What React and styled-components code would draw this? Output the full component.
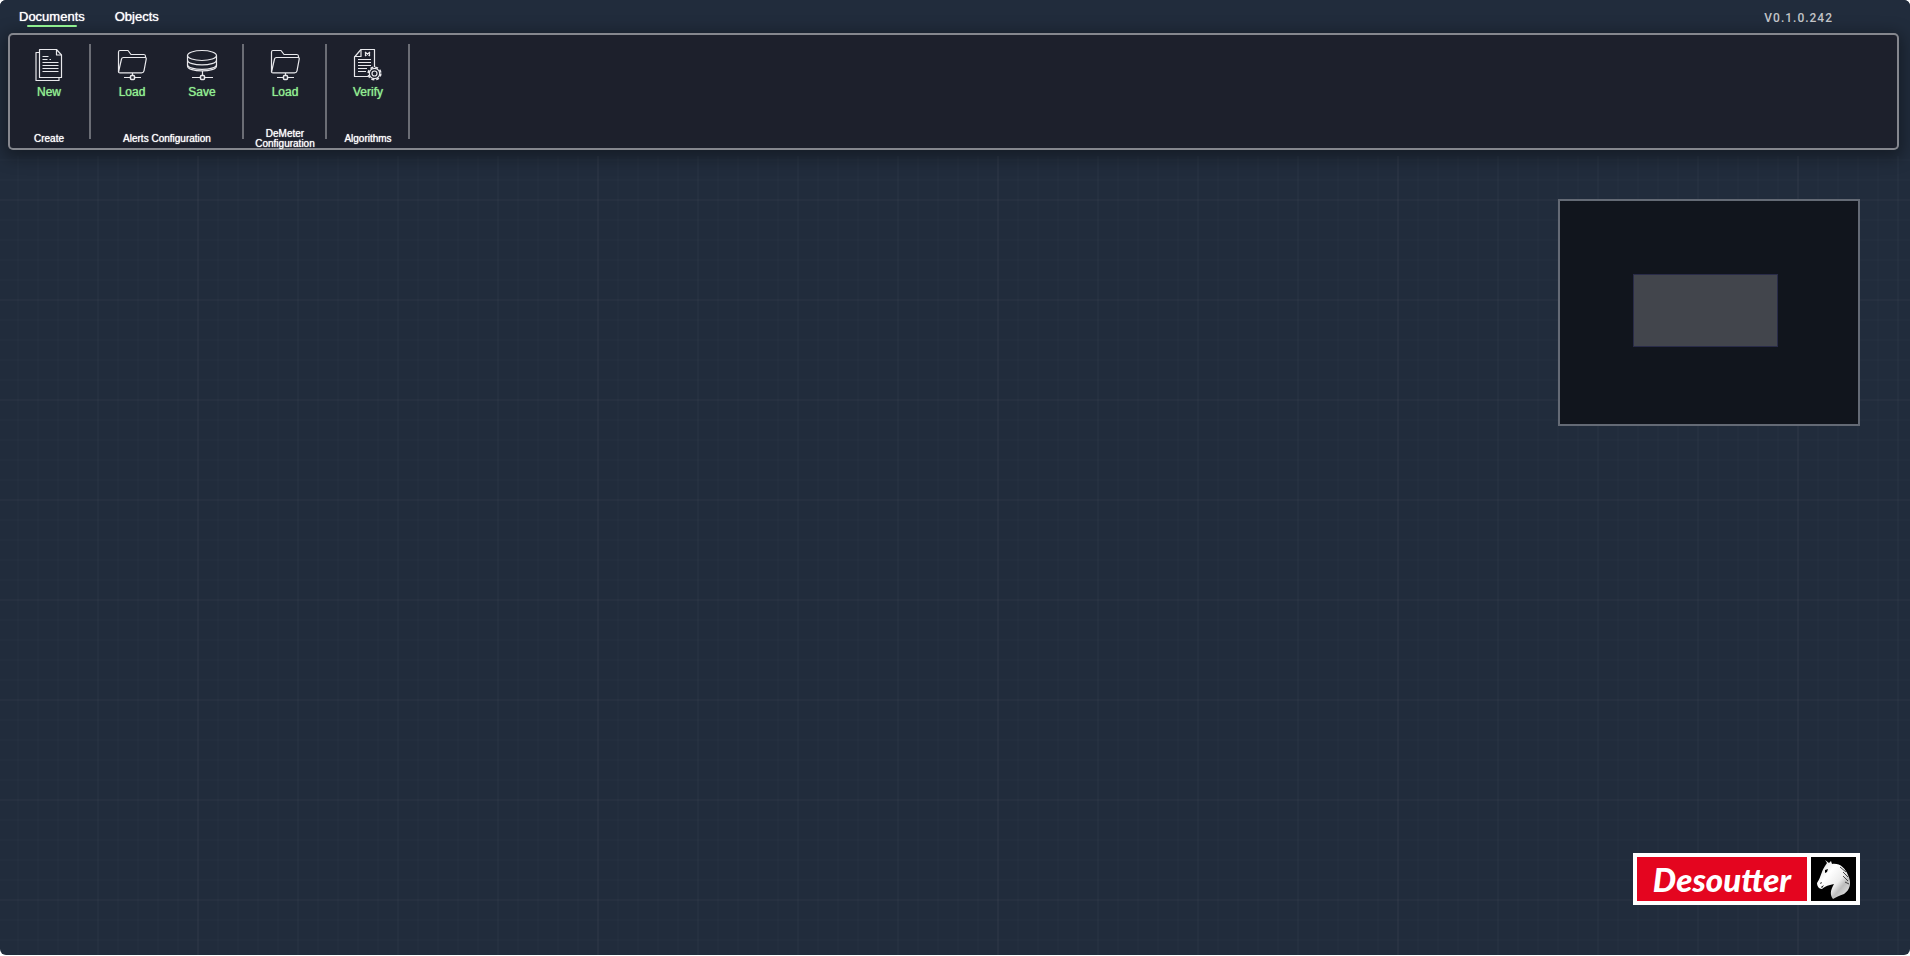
import React from 'react'
import styled, { createGlobalStyle } from 'styled-components'

const GlobalStyle = createGlobalStyle`
  * {
    box-sizing: border-box;
  }
  body {
    margin: 0;
    background: #fff;
    font-family: "Liberation Sans", Arial, sans-serif;
  }
`

const minor = 'rgba(255, 255, 255, 0.008)'
const major = 'rgba(255, 255, 255, 0.01)'

const Page = styled.div`
  display: flex;
  flex-direction: column;
  height: calc(100vh - 1px);
  overflow: hidden;
  border-radius: 6px;
  background: #212c3c;
`

const TopBar = styled.header`
  position: relative;
  z-index: 1;
  padding: 0 11px 6px 8px;
  background: #212c3c;
`

const TabRow = styled.div`
  display: flex;
  align-items: center;
  justify-content: space-between;
  height: 33px;
  padding: 3px 66px 0 11px;
`

const Tabs = styled.nav`
  display: flex;
  gap: 30px;
`

const Tab = styled.button`
  display: flex;
  flex-direction: column;
  align-items: center;
  padding: 0;
  border: none;
  background: none;
  color: #fff;
  font-family: inherit;
  font-size: 13px;
  line-height: 16px;
  text-shadow: 0 0 1px #fff;
  cursor: pointer;

  &::after {
    content: "";
    width: ${props => props.$active ? '50px' : '100%'};
    height: 2px;
    border-radius: 1px;
    background: ${props => props.$active ? '#90ee90' : 'transparent'};
  }
`

const Version = styled.span`
  color: #c2c4c8;
  font-family: Roboto, sans-serif;
  font-size: 12px;
  font-weight: 500;
  letter-spacing: 1px;
`

const Ribbon = styled.div`
  display: flex;
  height: 117px;
  border-radius: 5px;
  background: #1d202c;
  box-shadow: inset 0 0 0 2px #85878e, 0 4px 16px 4px rgba(0, 0, 0, 0.35);
`

const Group = styled.section`
  display: flex;
  flex-direction: column;
  height: 95px;
  margin-top: 11px;
  padding: 2px 5px 0 6px;
  border-right: 2px solid #6b6d75;
`

const GroupItems = styled.div`
  display: flex;
  flex-shrink: 0;
  height: 83px;
`

const GroupTitle = styled.h2`
  display: flex;
  flex-shrink: 0;
  align-items: center;
  justify-content: center;
  width: min-content;
  min-width: 100%;
  height: 20px;
  margin: 0;
  color: #fff;
  font-size: 10px;
  font-weight: 400;
  line-height: 10px;
  text-align: center;
  text-shadow: 0 0 1px #fff;
`

const ToolButton = styled.button`
  display: flex;
  flex-direction: column;
  align-items: center;
  align-self: flex-start;
  gap: 3px;
  width: 70px;
  padding: 0;
  border: none;
  background: none;
  color: #90ee90;
  font-family: inherit;
  font-size: 12px;
  line-height: 14px;
  text-shadow: 0 0 1px #90ee90;
  cursor: pointer;
`

const Icon = styled.svg`
  width: 36px;
  height: 36px;
  fill: none;
  stroke: #e8e8ec;
  stroke-width: 1.2;
  stroke-linejoin: round;
`

const Canvas = styled.main`
  display: flex;
  flex: 1;
  flex-direction: column;
  align-items: flex-end;
  justify-content: space-between;
  padding: 43px 50px 50px;
  background-image:
    linear-gradient(${major} 2px, transparent 2px),
    linear-gradient(90deg, ${major} 2px, transparent 2px),
    linear-gradient(90deg, ${minor} 2px, transparent 2px),
    linear-gradient(${minor} 2px, transparent 2px),
    linear-gradient(90deg, ${minor} 2px, transparent 2px);
  background-size: 100px 100px, 400px 400px, 100px 100px, 20px 20px, 20px 20px;
  background-position: 0 43px, 197px 0, 97px 0, 0 3px, 17px 0;
`

const MiniMap = styled.div`
  display: flex;
  align-items: center;
  justify-content: center;
  width: 302px;
  height: 227px;
  padding: 0 8px 4px 0;
  border: 2px solid #646a75;
  background: #11151d;
`

const Viewport = styled.div`
  width: 145px;
  height: 73px;
  border: 1px solid #292b48;
  background: #42454c;
`

const Logo = styled.div`
  display: flex;
  gap: 4px;
  height: 52px;
  padding: 4px;
  background: #fff;
`

const WordMark = styled.div`
  display: flex;
  align-items: center;
  justify-content: center;
  width: 170px;
  background: #e4051f;
  color: #fff;
  font-family: Lato, sans-serif;
  font-size: 33px;
  font-style: italic;
  font-weight: 900;
  line-height: 44px;
`

const Emblem = styled.svg`
  width: 45px;
  height: 44px;
  background: #000;
`

function NewIcon() {
  return (
    <Icon viewBox="0 0 36 36" aria-hidden="true">
      <path d="M8.500 3.500h17l5 5.500v22.500h-22z" />
      <path d="M25.500 3.500v5.500h5" />
      <path d="M8.500 6.500h-3.500v28h23v-3" />
      <path d="M11.500 10.500h6M11.500 13.500h5M18.500 13.500h1.500M11.500 16.500h16M11.500 19.500h16M11.500 22.500h16M11.500 25.500h16" />
    </Icon>
  )
}

function LoadIcon() {
  return (
    <Icon viewBox="0 0 36 36" aria-hidden="true">
      <path d="M4.500 26V6q0-1.500 1.500-1.500h8l3 4h13q1.500 0 1.500 2v1.500" />
      <path d="M4.500 26l3-13q.4-1.500 2-1.500h21.500q1.500 0 1.200 1.700l-2.200 11.600q-.4 2-2.500 2h-21.500q-1.500 0-1.500-.8z" />
      <path d="M18.500 27v3M10 31.500h6M21 31.500h6" />
      <rect x="16.500" y="29.500" width="4" height="4" rx="1" strokeWidth="1.500" />
    </Icon>
  )
}

function SaveIcon() {
  return (
    <Icon viewBox="0 0 36 36" aria-hidden="true">
      <ellipse cx="18" cy="9.500" rx="14.500" ry="5" />
      <path d="M3.500 9.500v4.500c0 6.500 29 6.500 29 0V9.500" />
      <path d="M3.500 14v4.500c0 6.500 29 6.500 29 0V14" />
      <path d="M3.500 18.500v1.500c0 6.500 29 6.500 29 0v-1.500" />
      <path d="M18.500 25v4.500M8 31.500h8M21 31.500h8" />
      <rect x="16.500" y="29.500" width="4" height="4" rx="1" strokeWidth="1.500" />
    </Icon>
  )
}

function VerifyIcon() {
  return (
    <Icon viewBox="0 0 36 36" aria-hidden="true">
      <path d="M18 30.500H4.500V11l6.500-7.500h13.500V21" />
      <path d="M4.500 10.500h6.500v-7" />
      <path d="M15 6l5 4M20 6l-5 4M15.500 6v4M19.500 6v4" />
      <path d="M8 13.500h13M8 16.500h13M8 19.500h13M8 22.500h9M8 25.500h8" />
      <circle cx="24.500" cy="27.500" r="5.200" />
      <circle cx="24.500" cy="27.500" r="6.300" strokeDasharray="2.900 2.050" strokeWidth="1.600" />
      <circle cx="24.500" cy="27.500" r="2.500" />
    </Icon>
  )
}

function HorseHead() {
  return (
    <Emblem viewBox="0 0 45 44" aria-hidden="true">
      <defs>
        <linearGradient id="mane" x1="0" y1="0" x2="1" y2="1">
          <stop offset="0" stopColor="#d2d2d2" />
          <stop offset="0.350" stopColor="#fff" />
          <stop offset="0.600" stopColor="#ececec" />
          <stop offset="0.720" stopColor="#bcbcbc" />
          <stop offset="1" stopColor="#f2f2f2" />
        </linearGradient>
      </defs>
      <path
        fill="url(#mane)"
        d="M14 3l4 3 2-2 1 3c8-1 13 4 16 11 4 8 2 15-4 19-5 2-8 3-11 5-3-4-3-8 1-15l-4 1c-4 1-6 2-8 4-3 0-5-3-5-6 4-6 4-11 8-17l2-3z"
      />
      <path fill="#000" d="M14 13l3-1-1 3-2 1zM9 26l2-1-1 2zM10 30l3-2-2 3z" />
      <path fill="none" stroke="#444" d="M29 10l6 5M32 15l5 5M32 19l5 5M34 25l4 2" />
    </Emblem>
  )
}

const groups = [
  { title: 'Create', items: [{ label: 'New', icon: NewIcon }] },
  {
    title: 'Alerts Configuration',
    items: [
      { label: 'Load', icon: LoadIcon },
      { label: 'Save', icon: SaveIcon },
    ],
  },
  { title: 'DeMeter Configuration', items: [{ label: 'Load', icon: LoadIcon }] },
  { title: 'Algorithms', items: [{ label: 'Verify', icon: VerifyIcon }] },
]

function App() {
  return (
    <Page>
      <GlobalStyle />
      <TopBar>
        <TabRow>
          <Tabs>
            <Tab type="button" $active>Documents</Tab>
            <Tab type="button">Objects</Tab>
          </Tabs>
          <Version>V0.1.0.242</Version>
        </TabRow>

        <Ribbon>
          {groups.map(group => (
            <Group key={group.title}>
              <GroupItems>
                {group.items.map(item => (
                  <ToolButton type="button" key={item.label}>
                    <item.icon />
                    {item.label}
                  </ToolButton>
                ))}
              </GroupItems>
              <GroupTitle>{group.title}</GroupTitle>
            </Group>
          ))}
        </Ribbon>
      </TopBar>

      <Canvas>
        <MiniMap>
          <Viewport />
        </MiniMap>
        <Logo>
          <WordMark>Desoutter</WordMark>
          <HorseHead />
        </Logo>
      </Canvas>
    </Page>
  )
}

export default App
